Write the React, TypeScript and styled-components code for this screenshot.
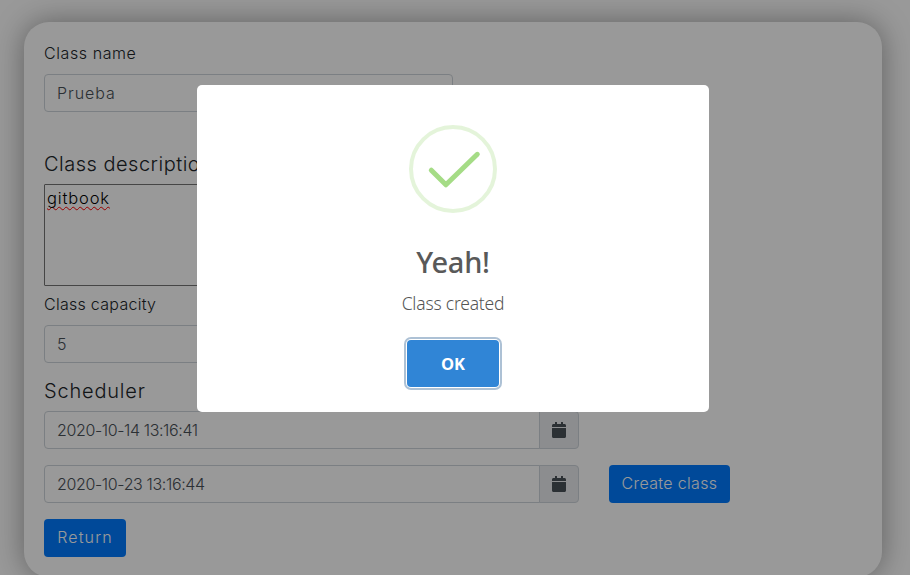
import React from "react";
import styled, { createGlobalStyle } from "styled-components";

const GlobalStyle = createGlobalStyle`
  *, *::before, *::after { box-sizing: border-box; }
  html, body { margin: 0; height: 575px; overflow: hidden; background: #fff; }
  body, button, input { font-family: "Inter", "Liberation Sans", sans-serif; font-size: 16px; font-weight: 300; }
`;

const Page = styled.main`
  height: 575px;
  padding: 22px 28px 0 24px;
  overflow: hidden;
`;

const Card = styled.form`
  display: flex;
  flex-direction: column;
  align-items: flex-start;
  height: 555px;
  padding: 20px;
  border-radius: 25px;
  background: #fff;
  box-shadow: 0 0 30px rgba(0, 0, 0, 0.38);
  color: #212529;
`;

const Label = styled.label<{ $track: number; $top?: number }>`
  height: 24px;
  margin: ${(p) => p.$top ?? 0}px 0 8px;
  line-height: 23px;
  letter-spacing: ${(p) => p.$track}px;
  white-space: nowrap;
`;

const Heading = styled.h5<{ $track: number; $top: number }>`
  height: 24px;
  margin: ${(p) => p.$top}px 0 8px;
  font-size: 20px;
  font-weight: 300;
  line-height: 24px;
  letter-spacing: ${(p) => p.$track}px;
  white-space: nowrap;
`;

const Field = styled.input<{ $track?: number }>`
  width: 409px;
  height: 38px;
  padding: 6px 12px;
  border: 1px solid #ced4da;
  border-radius: 4px;
  background: #fff;
  color: #495057;
  letter-spacing: ${(p) => p.$track ?? 0}px;
  outline: 0;
`;

const DescriptionBox = styled.div`
  width: 409px;
  height: 102px;
  padding: 1px 2px;
  border: 1px solid #767676;
  border-radius: 1px;
  color: #000;
  font-size: 16.5px;
  line-height: 24px;
  letter-spacing: 0.85px;
`;

const Misspelled = styled.span`
  text-decoration: underline wavy #f00 1px;
  text-decoration-skip-ink: none;
  text-underline-offset: 2px;
`;

const ScheduleRow = styled.div`
  display: flex;
  gap: 30px;
  margin-bottom: 16px;
`;

const InputGroup = styled.div`
  display: flex;
  width: 535px;

  ${Field} {
    flex: 1;
    min-width: 0;
    border-radius: 4px 0 0 4px;
  }
`;

const CalendarButton = styled.button`
  display: flex;
  align-items: center;
  justify-content: center;
  width: 40px;
  height: 38px;
  margin-left: -1px;
  padding: 0;
  border: 1px solid #ced4da;
  border-radius: 0 4px 4px 0;
  background: #e9ecef;
  color: #495057;
`;

const PrimaryButton = styled.button<{ $width: number; $track: number }>`
  width: ${(p) => p.$width}px;
  height: 38px;
  padding: 0 0 2px;
  border: 0;
  border-radius: 4px;
  background: #007bff;
  color: #fff;
  letter-spacing: ${(p) => p.$track}px;
  white-space: nowrap;
`;

const Backdrop = styled.div`
  position: fixed;
  inset: 0;
  display: flex;
  align-items: flex-start;
  justify-content: center;
  padding: 85px 4px 0 0;
  background: rgba(0, 0, 0, 0.4);
`;

const Dialog = styled.div`
  display: flex;
  flex-direction: column;
  align-items: center;
  width: 512px;
  height: 327px;
  padding-top: 40px;
  border-radius: 5px;
  background: #fff;
  font-family: "Open Sans", "Noto Sans", sans-serif;
`;

const DialogTitle = styled.h2`
  height: 40px;
  margin: 29px 0 0;
  color: #595959;
  font-family: "Noto Sans", sans-serif;
  font-size: 29px;
  font-weight: 500;
  line-height: 40px;
  letter-spacing: -0.3px;
`;

const DialogText = styled.p`
  height: 24px;
  margin: 9px 0 0;
  color: #545454;
  font-family: "Noto Sans", sans-serif;
  font-size: 17.5px;
  font-weight: 300;
  line-height: 24px;
  letter-spacing: -0.2px;
  white-space: nowrap;
`;

const ConfirmButton = styled.button`
  width: 92px;
  height: 47px;
  margin-top: 25px;
  padding: 0;
  border: 0;
  border-radius: 4px;
  background: #3085d6;
  box-shadow: 0 0 0 1px #fff, 0 0 0 3px rgba(50, 100, 150, 0.4);
  color: #fff;
  font-family: "Open Sans", sans-serif;
  font-size: 16.5px;
  font-weight: 700;
`;

const CalendarIcon = () => (
  <svg width="14" height="16" viewBox="0 0 448 512" fill="currentColor">
    <path d="M12 192h424c6.600 0 12 5.400 12 12v260c0 26.500-21.500 48-48 48H48c-26.500 0-48-21.500-48-48V204c0-6.600 5.400-12 12-12zm436-44v-36c0-26.500-21.500-48-48-48h-48V12c0-6.600-5.400-12-12-12h-40c-6.600 0-12 5.400-12 12v52H160V12c0-6.600-5.400-12-12-12h-40c-6.600 0-12 5.400-12 12v52H48C21.500 64 0 85.500 0 112v36c0 6.600 5.400 12 12 12h424c6.600 0 12-5.400 12-12z" />
  </svg>
);

const SuccessIcon = () => (
  <svg width="88" height="88" viewBox="0 0 88 88" fill="none">
    <circle cx="44" cy="44" r="42" stroke="#a5dc86" strokeOpacity="0.3" strokeWidth="4" />
    <path d="M22.300 45.200 36.900 59.800 68.300 29.300" stroke="#a5dc86" strokeWidth="5" strokeLinecap="round" strokeLinejoin="round" />
  </svg>
);

const DateInput = ({ value, track }: { value: string; track: number }) => (
  <InputGroup>
    <Field readOnly value={value} $track={track} />
    <CalendarButton type="button" aria-label="Pick a date">
      <CalendarIcon />
    </CalendarButton>
  </InputGroup>
);

export default function App() {
  return (
    <>
      <GlobalStyle />
      <Page>
        <Card>
          <Label $track={0.58}>Class name</Label>
          <Field readOnly value="Prueba" $track={0.95} />
          <Heading $top={40} $track={0.5}>Class description</Heading>
          <DescriptionBox>
            <Misspelled>gitbook</Misspelled>
          </DescriptionBox>
          <Label $top={7} $track={0.28}>Class capacity</Label>
          <Field readOnly value="5" />
          <Heading $top={16} $track={0.8}>Scheduler</Heading>
          <ScheduleRow>
            <DateInput value="2020-10-14 13:16:41" track={-0.38} />
          </ScheduleRow>
          <ScheduleRow>
            <DateInput value="2020-10-23 13:16:44" track={-0.36} />
            <PrimaryButton type="button" $width={121} $track={0.34}>Create class</PrimaryButton>
          </ScheduleRow>
          <PrimaryButton type="button" $width={82} $track={1.1}>Return</PrimaryButton>
        </Card>
      </Page>
      <Backdrop>
        <Dialog role="dialog">
          <SuccessIcon />
          <DialogTitle>Yeah!</DialogTitle>
          <DialogText>Class created</DialogText>
          <ConfirmButton>OK</ConfirmButton>
        </Dialog>
      </Backdrop>
    </>
  );
}
